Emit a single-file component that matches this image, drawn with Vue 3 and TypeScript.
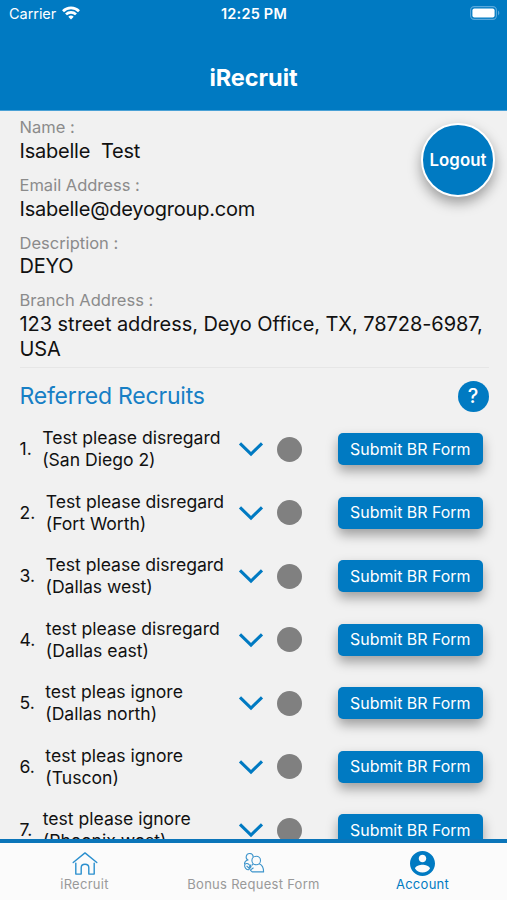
<script setup lang="ts">
interface Detail { label: string; value: string; wide?: boolean }
interface Recruit { name: string; city: string }

const details: Detail[] = [
  { label: 'Name :', value: 'Isabelle  Test' },
  { label: 'Email Address :', value: 'Isabelle@deyogroup.com' },
  { label: 'Description :', value: 'DEYO' },
  { label: 'Branch Address :', value: '123 street address, Deyo Office, TX, 78728-6987, USA', wide: true },
]

const recruits: Recruit[] = [
  { name: 'Test please disregard', city: '(San Diego 2)' },
  { name: 'Test please disregard', city: '(Fort Worth)' },
  { name: 'Test please disregard', city: '(Dallas west)' },
  { name: 'test please disregard', city: '(Dallas east)' },
  { name: 'test pleas ignore', city: '(Dallas north)' },
  { name: 'test pleas ignore', city: '(Tuscon)' },
  { name: 'test please ignore', city: '(Phoenix west)' },
]
</script>

<template>
  <div class="screen">
    <header class="top">
      <div class="status">
        <div class="carrier">
          <span>Carrier</span>
          <svg class="wifi" viewBox="0 0 18 14" width="18" height="14">
            <path d="M9 13.6 6.3 10.8a3.9 3.9 0 0 1 5.4 0z" fill="#fff" />
            <path d="M4 8.4a7.1 7.1 0 0 1 10 0M1 5.2a11.4 11.4 0 0 1 16 0" fill="none" stroke="#fff" stroke-width="2.7" />
          </svg>
        </div>
        <div class="time">12:25 PM</div>
        <svg class="battery" viewBox="0 0 30 14" width="30" height="14">
          <rect x=".6" y=".6" width="25.8" height="12.8" rx="3.6" fill="none" stroke="#5aa9dc" stroke-width="1.1" />
          <rect x="2.4" y="2.4" width="22.2" height="9.2" rx="2" fill="#fff" />
          <path d="M28 4.6c1.8.8 1.8 4 0 4.8z" fill="#5aa9dc" />
        </svg>
      </div>
      <h1>iRecruit</h1>
    </header>

    <main>
      <button class="logout">Logout</button>
      <section class="details">
        <div v-for="d in details" :key="d.label" class="detail">
          <div class="label">{{ d.label }}</div>
          <div class="value" :class="{ wide: d.wide }">{{ d.value }}</div>
        </div>
      </section>
      <section class="referred">
        <div class="heading">
          <h2>Referred Recruits</h2>
          <button class="help">?</button>
        </div>
        <div v-for="(r, i) in recruits" :key="i" class="row">
          <div class="who">
            <span class="num">{{ i + 1 }}.</span>
            <span class="person">{{ r.name }}<br />{{ r.city }}</span>
          </div>
          <svg class="chevron" viewBox="0 0 26 16" width="26" height="16">
            <path d="M2 2.4 13 13 24 2.4" fill="none" stroke="#007ac2" stroke-width="3.1" />
          </svg>
          <span class="dot"></span>
          <button class="submit">Submit BR Form</button>
        </div>
      </section>
    </main>

    <nav class="tabs">
      <div class="tab">
        <svg viewBox="0 0 26 24" width="26" height="24" fill="none" stroke="#2b8fce" stroke-width="1.4" stroke-linejoin="round" stroke-linecap="round">
          <path d="M1.2 11 13 1.4 24.8 11" />
          <path d="M3.8 11.6v11h5.4v-6.4q0-3.4 3.8-3.4t3.8 3.4v6.4h5.4v-11" />
        </svg>
        <span>iRecruit</span>
      </div>
      <div class="tab">
        <svg viewBox="0 0 22 22" width="22" height="22" fill="none" stroke="#3d94cb" stroke-width="1.1" stroke-linejoin="round">
          <path d="M10.2 4.4A3.5 3.5 0 1 0 5.400 7.800" />
          <circle cx="13.200" cy="8" r="4.300" />
          <path d="M4.600 7.600C2.500 8.300 1.500 9.600 1.500 11.600" />
          <path d="M10.200 11.400 8.800 13M16.200 11.200c2.700 1 4.400 3.900 4.400 8.200H9.200L7.300 17.600" />
          <path d="M1.600 12.400c1-1.700 3-1.900 4.200-.6l2.300 2.300-2.500 3.200C3.300 17.500 1.400 15 1.600 12.400zM3.600 13.300l2 2.100 2.600-3.200M7.300 17.600l3.200-2.400" />
        </svg>
        <span>Bonus Request Form</span>
      </div>
      <div class="tab active">
        <svg viewBox="2 2 20 20" width="25" height="25" fill="#007ac2">
          <path d="M12 2C6.480 2 2 6.480 2 12s4.480 10 10 10 10-4.480 10-10S17.520 2 12 2zm0 3c1.660 0 3 1.340 3 3s-1.340 3-3 3-3-1.340-3-3 1.340-3 3-3zm0 14.200c-2.500 0-4.710-1.280-6-3.220.030-1.990 4-3.080 6-3.080 1.990 0 5.970 1.090 6 3.080-1.290 1.940-3.500 3.220-6 3.220z" />
        </svg>
        <span>Account</span>
      </div>
    </nav>
  </div>
</template>

<style>
body { background: #f1f1f1; overflow: hidden; }
</style>

<style scoped>
* { box-sizing: border-box; }
.screen {
  width: 507px; height: 900px; display: flex; flex-direction: column;
  background: #f1f1f1; color: #111; overflow: hidden;
  font-family: Inter, "Liberation Sans", sans-serif;
}
button { border: 0; padding: 0; font-family: inherit; color: #fff; background: #007ac2; }
.top { height: 111px; flex: none; background: #007ac2; color: #fff; border-bottom: 1px solid #4aa1d6; }
.status { height: 27px; display: grid; grid-template-columns: 1fr auto 1fr; align-items: center; padding: 0 7px 0 9px; font-size: 14.5px; }
.carrier { display: flex; align-items: center; gap: 6px; letter-spacing: -0.05px; }
.wifi { margin-top: -2px; }
.time { font-weight: 600; letter-spacing: 0.2px; margin-right: 1px; }
.battery { justify-self: end; margin-top: -1px; }
h1 { margin: 0; height: 101px; line-height: 101px; text-align: center; font-size: 23.5px; font-weight: 700; letter-spacing: -0.05px; }
main { flex: 1; min-height: 0; overflow: hidden; position: relative; padding: 5px 18.5px 0 19.5px; }
.logout {
  position: absolute; right: 12px; top: 12px; width: 74px; height: 74px; border-radius: 50%;
  border: 2.5px solid #fff; font-size: 16.8px; font-weight: 600; letter-spacing: 0.1px; box-shadow: 0 6px 13px rgba(0, 0, 0, .36);
}
.details { border-bottom: 1px solid #e6e6e6; padding-bottom: 5.4px; }
.detail { margin-bottom: 10.2px; }
.detail:last-child { margin-bottom: 0; }
.label { font-size: 16.5px; line-height: 22px; height: 22.8px; color: #8b8b8b; }
.value { font-size: 20px; line-height: 24.8px; white-space: pre-wrap; letter-spacing: -0.22px; }
.value.wide { letter-spacing: -0.06px; }
.heading { display: flex; align-items: center; justify-content: space-between; height: 49.3px; padding-top: 6.7px; }
h2 { margin: 0; font-size: 23px; font-weight: 400; color: #177fc5; letter-spacing: -0.2px; }
.help { width: 31px; height: 31px; border-radius: 50%; font-size: 20px; font-weight: 500; }
.row { height: 63.5px; display: grid; grid-template-columns: 219px 38.5px 61px 144.5px; align-items: center; }
.who { display: flex; align-items: center; font-size: 17.6px; line-height: 22px; letter-spacing: -0.02px; }
.num { margin-right: 10.5px; }
.person { white-space: nowrap; }
.chevron { margin-left: -0.5px; }
.dot { width: 25px; height: 25px; border-radius: 50%; background: #808080; }
.submit { height: 32px; border-radius: 5px; font-size: 15.9px; letter-spacing: 0; box-shadow: 0 6px 12px rgba(0, 0, 0, .34); }
.tabs { flex: none; height: 61px; border-top: 4px solid #0b75b9; background: #fbfbfb; display: grid; grid-template-columns: repeat(3, 1fr); color: #999; font-size: 13px; }
.tab { display: flex; flex-direction: column; align-items: center; padding-top: 7.5px; }
.tab svg { height: 25px; }
.tab span { line-height: 16px; letter-spacing: .28px; }
.active { color: #007ac2; }
</style>
